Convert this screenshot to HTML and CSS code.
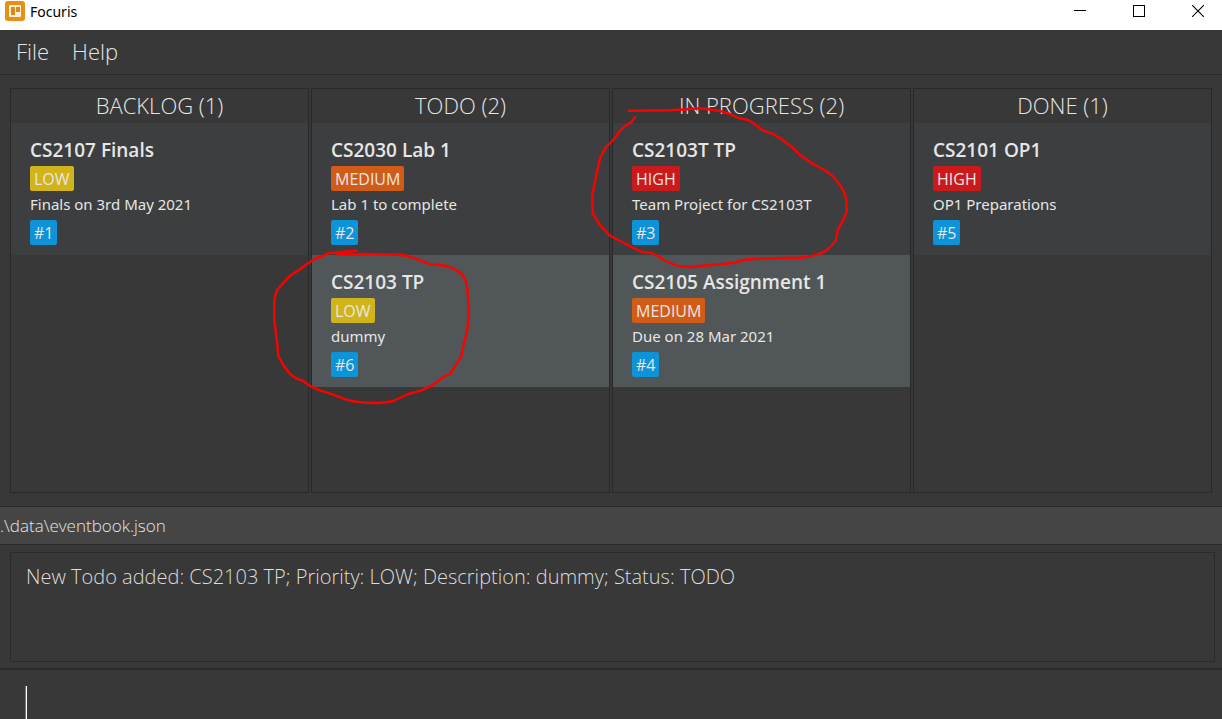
FILE: index.html
```html
<!DOCTYPE html>
<html lang="en">
<head>
<meta charset="utf-8">
<title>Focuris</title>
<link rel="stylesheet" href="styles.css">
</head>
<body>
<header class="titlebar">
  <svg class="app-icon" width="20" height="20" viewBox="0 0 20 20" aria-hidden="true">
    <rect width="20" height="20" rx="3" fill="#e6910f"/>
    <rect x="4" y="4" width="12" height="12" rx="1" fill="#f3efe8"/>
    <rect x="6" y="6" width="4" height="8" fill="#e08a0b"/>
    <rect x="11" y="6" width="4" height="5" fill="#e08a0b"/>
  </svg>
  <h1 class="app-name">Focuris</h1>
  <div class="window-controls">
    <button class="window-button" aria-label="Minimize"><svg width="12" height="12" viewBox="0 0 12 12"><path d="M0 5.5h12" stroke="#000"/></svg></button>
    <button class="window-button" aria-label="Maximize"><svg width="12" height="12" viewBox="0 0 12 12"><rect x=".5" y=".5" width="11" height="11" fill="none" stroke="#000"/></svg></button>
    <button class="window-button" aria-label="Close"><svg width="12" height="12" viewBox="0 0 12 12"><path d="M0 0l12 12M12 0L0 12" stroke="#000" stroke-width="1.1"/></svg></button>
  </div>
</header>
<nav class="menubar">
  <button class="menu">File</button>
  <button class="menu">Help</button>
</nav>
<main class="board">
  <section class="column">
    <h2 class="column-title">BACKLOG (1)</h2>
    <article class="card">
      <h3 class="card-title">CS2107 Finals</h3>
      <span class="badge low">LOW</span>
      <p class="description">Finals on 3rd May 2021</p>
      <span class="badge id">#1</span>
    </article>
  </section>
  <section class="column">
    <h2 class="column-title">TODO (2)</h2>
    <article class="card">
      <h3 class="card-title">CS2030 Lab 1</h3>
      <span class="badge medium">MEDIUM</span>
      <p class="description">Lab 1 to complete</p>
      <span class="badge id">#2</span>
    </article>
    <article class="card">
      <h3 class="card-title">CS2103 TP</h3>
      <span class="badge low">LOW</span>
      <p class="description">dummy</p>
      <span class="badge id">#6</span>
    </article>
  </section>
  <section class="column">
    <h2 class="column-title">IN PROGRESS (2)</h2>
    <article class="card">
      <h3 class="card-title">CS2103T TP</h3>
      <span class="badge high">HIGH</span>
      <p class="description">Team Project for CS2103T</p>
      <span class="badge id">#3</span>
    </article>
    <article class="card">
      <h3 class="card-title">CS2105 Assignment 1</h3>
      <span class="badge medium">MEDIUM</span>
      <p class="description">Due on 28 Mar 2021</p>
      <span class="badge id">#4</span>
    </article>
  </section>
  <section class="column">
    <h2 class="column-title">DONE (1)</h2>
    <article class="card">
      <h3 class="card-title">CS2101 OP1</h3>
      <span class="badge high">HIGH</span>
      <p class="description">OP1 Preparations</p>
      <span class="badge id">#5</span>
    </article>
  </section>
</main>
<div class="statusbar">.\data\eventbook.json</div>
<div class="result">
  <textarea class="result-text" aria-label="Result" readonly>New Todo added: CS2103 TP; Priority: LOW; Description: dummy; Status: TODO</textarea>
</div>
<div class="command">
  <input class="command-input" type="text" aria-label="Command">
</div>
<svg class="annotations" width="1222" height="719" viewBox="0 0 1222 719" aria-hidden="true">
  <path d="M356.700 250.700L327.700 253.300L321.700 256.700L316.700 257.700L308.300 263L299 270L289.700 276L284 282.300L277.300 289.700Q275 295 274.300 301.700L274.300 320L277 341.700L278.300 355.700L283.300 365L290 374L296.700 378.700L302.700 380.700L310 386L320 390.300L333.300 394.700L343.300 398.700Q350 401 358.300 402Q368 403.300 378.300 403Q387 402.500 393.300 401L408.300 394L421.700 390.300L433.300 384.700L443.300 376.700L450 374L455 366L461 357.300L463.300 346L467 331.700L469 313.300L467.700 291.700L466 281.700Q464.500 277 461.700 274Q458.500 271 455 269.300L446.700 266L428.300 263.700L418.300 259.700L406.700 255.700L398.300 254.700L378.300 254.300L365 254L337.700 254.300"/>
  <path d="M628.700 110.700L670 110.300L686.700 109.300Q698 108 705 108.700L718.300 110.700L730 114L739.300 118.300L747.300 119.700L753.300 123L763.300 130.700L772.300 133.700L781.700 139.300L793.300 148.300L800 155L815 165.300L825 170.300L833.300 176.700Q838 182 841.700 187.700Q845 193 846 198.300L846.700 211.700L843.300 219.700L837.700 230L835.700 241L828.300 249Q823 253 816.700 254.700Q809 257 800 257.700L780 258L753.300 259L743.300 260L733.300 263L713.300 264.700L690 267Q683 267.200 676.700 265.700L666.700 261.700L658.300 256.300L652.300 253.300L643.300 252.300L633.300 248L610 235.700L600 225L592.700 213.300L592.300 195L596.700 173.300L600 158.300L605.700 147.300L613.300 140L619.300 131.700L624.300 126.700L631.700 121.700L635 117.300"/>
</svg>
</body>
</html>
```
FILE: styles.css
```css
* {
  box-sizing: border-box;
}

body {
  position: relative;
  display: flex;
  flex-direction: column;
  height: 100vh;
  margin: 0;
  overflow: hidden;
  background: #383838;
  color: #e6e6e6;
  font-family: "Open Sans", sans-serif;
  font-weight: 300;
}

h1, h2, h3, p {
  margin: 0;
}

button {
  border: 0;
  padding: 0;
  background: none;
  color: inherit;
  font: inherit;
}

.titlebar {
  display: flex;
  flex: none;
  height: 30px;
  padding: 1px 0 0 5px;
  background: #fff;
  color: #000;
}

.app-name {
  margin-left: 5px;
  font-family: "Noto Sans", sans-serif;
  font-size: 14px;
  font-weight: 400;
  line-height: 21px;
}

.window-controls {
  display: flex;
  margin-left: auto;
}

.window-button {
  display: flex;
  justify-content: center;
  width: 59px;
  padding: 4px 0 0 11px;
}

.menubar {
  display: flex;
  flex: none;
  gap: 23px;
  height: 45px;
  padding: 0 16px 2px;
  border-bottom: 1px solid #292929;
  font-size: 22px;
}

.board {
  display: grid;
  flex: 1;
  grid-template-columns: repeat(4, 1fr);
  gap: 2px;
  min-height: 0;
  padding: 13px 10px;
}

.column {
  border: 1px solid #292929;
}

.column-title {
  padding-bottom: 2px;
  font-size: 22px;
  font-weight: 300;
  line-height: 32px;
  text-align: center;
}

.card {
  display: flex;
  flex-direction: column;
  align-items: flex-start;
  padding: 13px 19px 10px;
  background: #3c3e3f;
}

.card:nth-of-type(even) {
  background: #515658;
}

.card-title {
  padding-bottom: 2px;
  font-size: 19px;
  font-weight: 600;
  line-height: 28px;
}

.description {
  padding-bottom: 2px;
  font-family: "Noto Sans", sans-serif;
  font-size: 15px;
  font-weight: 400;
  line-height: 27px;
}

.badge {
  padding: 1px 4px 0;
  border-radius: 2px;
  font-size: 16px;
  font-weight: 400;
  line-height: 24px;
}

.low {
  background: #d1b31a;
}

.medium {
  background: #d15c17;
}

.high {
  background: #cb1a1c;
}

.id {
  background: #0c93d8;
}

.statusbar {
  flex: none;
  border: solid #2b2b2b;
  border-width: 1px 0;
  background: #454545;
  font-size: 17px;
  line-height: 37px;
}

.result {
  display: flex;
  flex: none;
  padding: 7px 7px 6px 10px;
  border-bottom: 2px solid #2b2b2b;
}

.result-text {
  flex: 1;
  height: 110px;
  padding: 9px 15px;
  border: 1px solid #2b2b2b;
  outline: 0;
  background: #383838;
  color: #dcdcdc;
  font: 300 20px/29px "Open Sans", sans-serif;
  resize: none;
}

.command {
  display: flex;
  flex: none;
  padding: 16px 25px 0 26px;
}

.command-input {
  flex: 1;
  height: 33px;
  padding: 0;
  border: 0;
  border-left: 1px solid #fff;
  box-shadow: -1px 0 #777;
  outline: 0;
  background: none;
  color: #fff;
  font: 300 22px/33px "Open Sans", sans-serif;
}

.annotations {
  position: absolute;
  top: 0;
  left: 0;
  fill: none;
  stroke: #f00;
  stroke-width: 2.4;
  stroke-linecap: round;
  stroke-linejoin: round;
  pointer-events: none;
}
```
